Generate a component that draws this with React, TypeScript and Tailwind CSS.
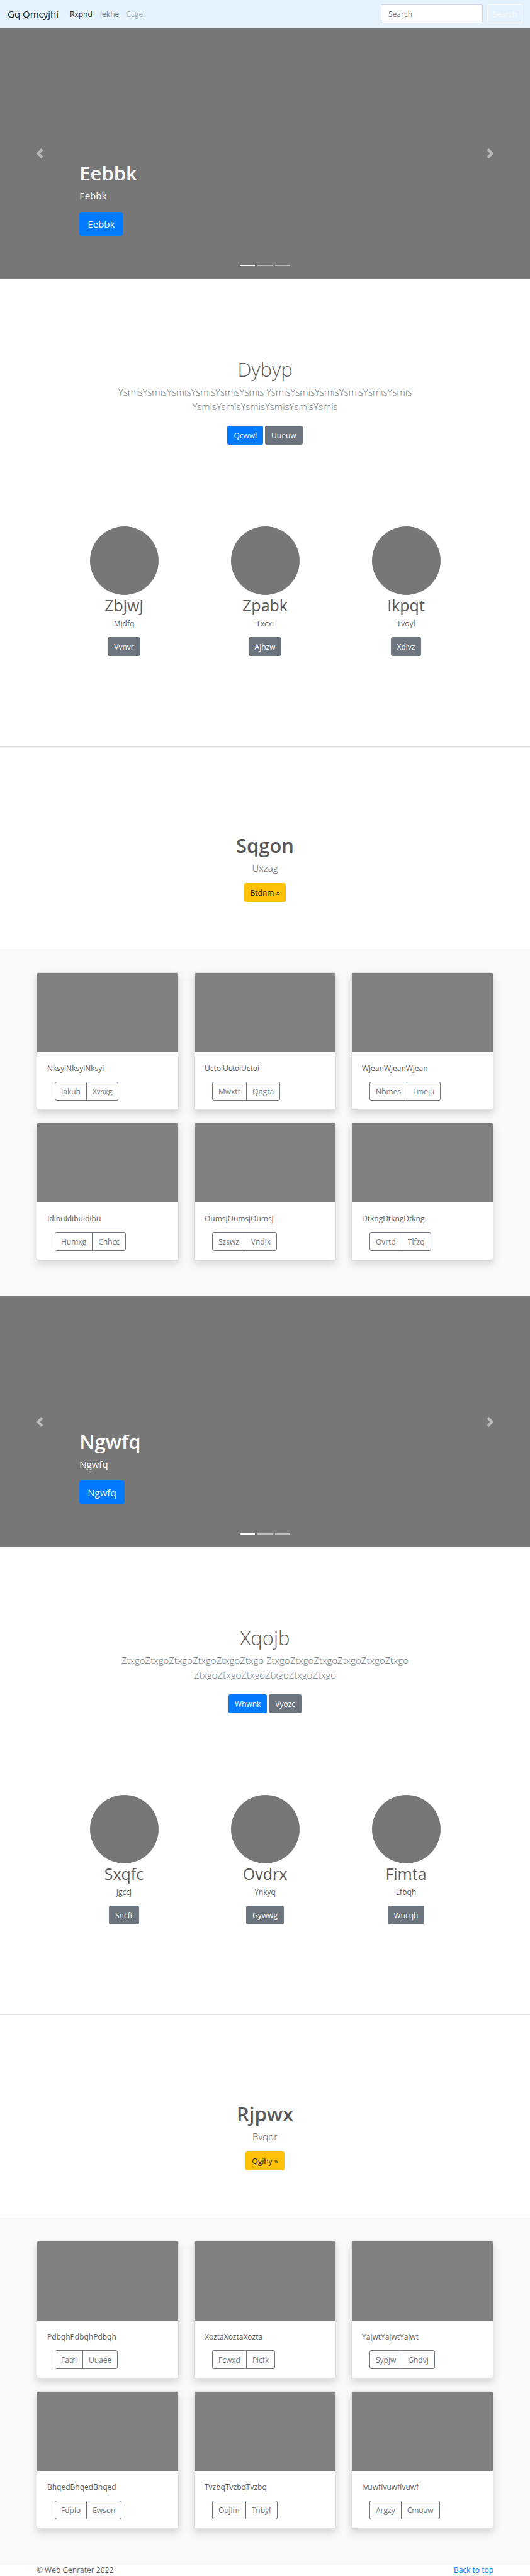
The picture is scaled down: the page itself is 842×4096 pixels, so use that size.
type Pair = [string, string];

interface Feature {
  name: string;
  text: string;
  action: string;
}

interface Album {
  text: string;
  actions: Pair;
}

interface Block {
  id: string;
  slide: string;
  hero: { title: string; text: string; actions: Pair };
  features: Feature[];
  promo: { title: string; text: string; action: string };
  albums: Album[];
}

const blocks: Block[] = [
  {
    id: "first",
    slide: "Eebbk",
    hero: {
      title: "Dybyp",
      text: "YsmisYsmisYsmisYsmisYsmisYsmis YsmisYsmisYsmisYsmisYsmisYsmis YsmisYsmisYsmisYsmisYsmisYsmis",
      actions: ["Qcwwl", "Uueuw"],
    },
    features: [
      { name: "Zbjwj", text: "Mjdfq", action: "Vvnvr" },
      { name: "Zpabk", text: "Txcxi", action: "Ajhzw" },
      { name: "Ikpqt", text: "Tvoyl", action: "Xdivz" },
    ],
    promo: { title: "Sqgon", text: "Uxzag", action: "Btdnm »" },
    albums: [
      { text: "NksyiNksyiNksyi", actions: ["Jakuh", "Xvsxg"] },
      { text: "UctoiUctoiUctoi", actions: ["Mwxtt", "Qpgta"] },
      { text: "WjeanWjeanWjean", actions: ["Nbmes", "Lmeju"] },
      { text: "IdibuIdibuIdibu", actions: ["Humxg", "Chhcc"] },
      { text: "OumsjOumsjOumsj", actions: ["Szswz", "Vndjx"] },
      { text: "DtkngDtkngDtkng", actions: ["Ovrtd", "Tlfzq"] },
    ],
  },
  {
    id: "second",
    slide: "Ngwfq",
    hero: {
      title: "Xqojb",
      text: "ZtxgoZtxgoZtxgoZtxgoZtxgoZtxgo ZtxgoZtxgoZtxgoZtxgoZtxgoZtxgo ZtxgoZtxgoZtxgoZtxgoZtxgoZtxgo",
      actions: ["Whwnk", "Vyozc"],
    },
    features: [
      { name: "Sxqfc", text: "Jgccj", action: "Sncft" },
      { name: "Ovdrx", text: "Ynkyq", action: "Gywwg" },
      { name: "Fimta", text: "Lfbqh", action: "Wucqh" },
    ],
    promo: { title: "Rjpwx", text: "Bvqqr", action: "Qgihy »" },
    albums: [
      { text: "PdbqhPdbqhPdbqh", actions: ["Fatrl", "Uuaee"] },
      { text: "XoztaXoztaXozta", actions: ["Fcwxd", "Plcfk"] },
      { text: "YajwtYajwtYajwt", actions: ["Sypjw", "Ghdvj"] },
      { text: "BhqedBhqedBhqed", actions: ["Fdplo", "Ewson"] },
      { text: "TvzbqTvzbqTvzbq", actions: ["Oojlm", "Tnbyf"] },
      { text: "IvuwfIvuwfIvuwf", actions: ["Argzy", "Cmuaw"] },
    ],
  },
];

const tones = {
  primary: "bg-[#007bff] text-white",
  secondary: "bg-[#6c757d] text-white",
  warning: "bg-[#ffc107] text-[#212529]",
};

function Button({ tone, children }: { tone: keyof typeof tones; children: string }) {
  return (
    <button type="button" className={`h-[30px] rounded-[3px] px-[10px] text-[12px] leading-[19px] ${tones[tone]}`}>
      {children}
    </button>
  );
}

function Navbar() {
  return (
    <nav className="flex h-[44px] items-center bg-[#e3f2fd] px-3">
      <a href="#top" className="mr-3 text-[15px] leading-[23px] text-black/90">
        Gq Qmcyjhi
      </a>
      <div className="flex grow gap-3 pl-1.5 text-[12px] leading-[19px]">
        <a href="#first" className="text-black/90">
          Rxpnd
        </a>
        <a href="#second" className="text-black/50">
          Iekhe
        </a>
        <a href="#second" className="text-black/30">
          Ecgel
        </a>
      </div>
      <form className="flex gap-[7px]">
        <input
          type="search"
          aria-label="Search"
          placeholder="Search"
          className="h-[30px] w-[162px] rounded-[3px] border border-[#ced4da] bg-white px-[11px] text-[12px] text-[#495057] placeholder:text-[#6c757d]"
        />
        <button
          type="button"
          className="h-[30px] rounded-[3px] border border-[#f8f9fa] px-2 text-[12px] leading-[19px] text-[#f8f9fa]"
        >
          Search
        </button>
      </form>
    </nav>
  );
}

function Carousel({ text }: { text: string }) {
  return (
    <section className="relative flex h-[399px] flex-col items-start justify-end bg-[#777777] px-[15%] pb-[68px] text-white">
      <h1 className="text-[31px] leading-[38px] font-semibold">{text}</h1>
      <p className="mt-[6px] text-[15px] leading-[23px]">{text}</p>
      <button type="button" className="mt-[14px] h-[38px] rounded-[4px] bg-[#007bff] px-[13px] text-[15px] leading-[23px]">
        {text}
      </button>
      <button
        type="button"
        aria-label="Previous"
        className="absolute inset-y-0 left-0 flex w-[15%] items-center justify-center opacity-50"
      >
        <svg viewBox="0 0 8 8" className="size-4" fill="currentColor">
          <path d="M5.25 0l-4 4 4 4 1.5-1.5-2.5-2.5 2.5-2.5-1.5-1.5z" />
        </svg>
      </button>
      <button
        type="button"
        aria-label="Next"
        className="absolute inset-y-0 right-0 flex w-[15%] items-center justify-center opacity-50"
      >
        <svg viewBox="0 0 8 8" className="size-4" fill="currentColor">
          <path d="M2.75 0l-1.5 1.5 2.5 2.5-2.5 2.5 1.5 1.5 4-4-4-4z" />
        </svg>
      </button>
      <div className="absolute inset-x-0 bottom-5 flex justify-center gap-1">
        <span className="h-[2px] w-6 bg-white" />
        <span className="h-[2px] w-6 bg-white/50" />
        <span className="h-[2px] w-6 bg-white/50" />
      </div>
    </section>
  );
}

function Hero({ title, text, actions }: Block["hero"]) {
  return (
    <section className="flex flex-col items-center pt-[125px] text-center">
      <h2 className="text-[31px] leading-[38px] font-light">{title}</h2>
      <p className="mt-[6px] w-[58%] text-[15px] leading-[23px] font-light text-[#6c757d]">{text}</p>
      <div className="mt-[19px] flex gap-[3px]">
        <Button tone="primary">{actions[0]}</Button>
        <Button tone="secondary">{actions[1]}</Button>
      </div>
    </section>
  );
}

function Features({ items }: { items: Feature[] }) {
  return (
    <section className="grid grid-cols-3 px-[85px] pt-[130px] pb-[143px] text-center">
      {items.map((item) => (
        <div key={item.name} className="flex flex-col items-center">
          <div className="size-[109px] rounded-full bg-[#777777]" />
          <h2 className="mt-px text-[25px] leading-[30px]">{item.name}</h2>
          <p className="mt-[5px] mb-3 text-[12px] leading-[19px]">{item.text}</p>
          <Button tone="secondary">{item.action}</Button>
        </div>
      ))}
    </section>
  );
}

function Promo({ title, text, action }: Block["promo"]) {
  return (
    <section className="flex flex-col items-center pt-[138px] pb-[75px] text-center">
      <h2 className="text-[31px] leading-[38px] font-semibold">{title}</h2>
      <p className="mt-[6px] mb-3 text-[15px] leading-[23px] font-light">{text}</p>
      <Button tone="warning">{action}</Button>
    </section>
  );
}

function Albums({ items }: { items: Album[] }) {
  return (
    <section className="grid grid-cols-3 gap-x-6 gap-y-5 bg-[#f8f9fa] px-[58px] pt-[37px] pb-[57px]">
      {items.map((item) => (
        <article
          key={item.text}
          className="overflow-hidden rounded-[3px] border border-black/13 bg-white shadow-[0_6px_12px_rgba(0,0,0,0.15)]"
        >
          <div className="h-[126px] bg-[#808080]" />
          <div className="px-4 pt-4 pb-[14px]">
            <p className="text-[12px] leading-[19px]">{item.text}</p>
            <div className="mt-3 ml-3 flex text-[12px] leading-[19px] text-[#6c757d]">
              <button type="button" className="h-[30px] rounded-l-[3px] border border-[#6c757d] px-[9px]">
                {item.actions[0]}
              </button>
              <button type="button" className="-ml-px h-[30px] rounded-r-[3px] border border-[#6c757d] px-[9px]">
                {item.actions[1]}
              </button>
            </div>
          </div>
        </article>
      ))}
    </section>
  );
}

export default function App() {
  return (
    <div id="top" className="bg-white font-['Open_Sans','Noto_Sans',sans-serif] text-[#5a5a5a]">
      <Navbar />
      <main>
        {blocks.map((block) => (
          <div key={block.id} id={block.id}>
            <Carousel text={block.slide} />
            <Hero {...block.hero} />
            <Features items={block.features} />
            <hr className="border-black/10" />
            <Promo {...block.promo} />
            <Albums items={block.albums} />
          </div>
        ))}
      </main>
      <footer className="flex justify-between px-[58px] text-[12px] leading-[18px]">
        <p>© Web Genrater 2022</p>
        <a href="#top" className="text-[#007bff]">
          Back to top
        </a>
      </footer>
    </div>
  );
}
